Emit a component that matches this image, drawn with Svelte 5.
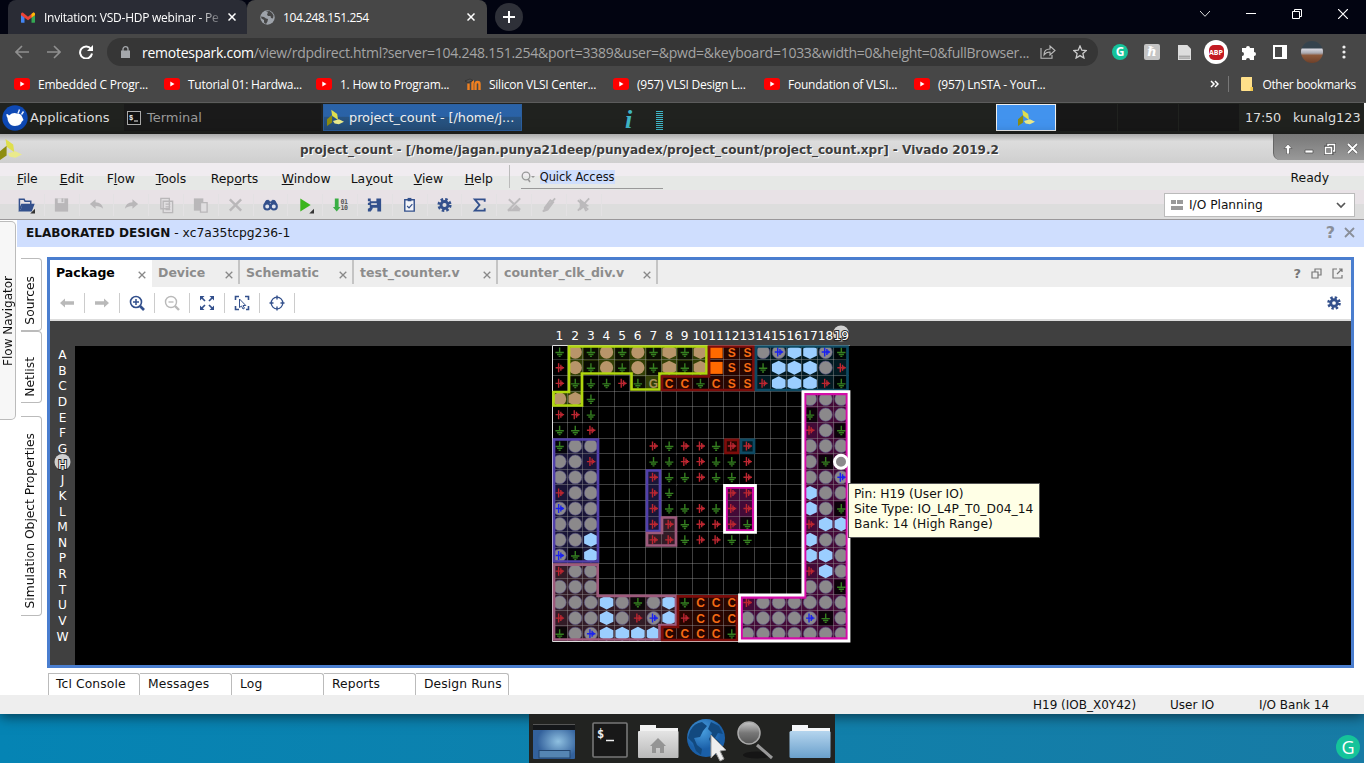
<script>
  const bookmarks = [
    { t: 'Embedded C Progr...', k: 'yt', w: 150 },
    { t: 'Tutorial 01: Hardwa...', k: 'yt', w: 152 },
    { t: '1. How to Program...', k: 'yt', w: 149 },
    { t: 'Silicon VLSI Center...', k: 'moodle', w: 148 },
    { t: '(957) VLSI Design L...', k: 'yt', w: 151 },
    { t: 'Foundation of VLSI...', k: 'yt', w: 150 },
    { t: '(957) LnSTA - YouT...', k: 'yt', w: 150 }
  ];
  const menus = [
    ['', 'F', 'ile', 42.7], ['', 'E', 'dit', 47], ['F', 'l', 'ow', 49], ['', 'T', 'ools', 55], ['Rep', 'o', 'rts', 71],
    ['', 'W', 'indow', 69], ['La', 'y', 'out', 63], ['', 'V', 'iew', 51], ['', 'H', 'elp', 44]
  ];
  const tools = ['open', 'save', 'undo', 'redo', 'copy', 'paste', 'cut', 'find', 'run', 'bits', 'flow', 'clip', 'gear', 'sigma', 'x1', 'x2', 'x3'];
  const docTabs = [
    { t: 'Package', w: 102, on: true }, { t: 'Device', w: 88 }, { t: 'Schematic', w: 114 },
    { t: 'test_counter.v', w: 144 }, { t: 'counter_clk_div.v', w: 160 }
  ];
  const viewTools = ['back', 'fwd', 'zin', 'zout', 'fit', 'sel', 'target'];
  const consoleTabs = [['Tcl Console', 92], ['Messages', 92], ['Log', 92], ['Reports', 92], ['Design Runs', 93]];
  const letters = 'ABCDEFGHJKLMNPRTUVW'.split('');
  const rows = [
    'gtgtgtgTgTqssobhhbg',
    'ptgtgtgTgTqssghhhop',
    'pgggpgGccgcssphhhpg',
    'tTg.............ooo',
    'ppg.............goo',
    'ggp.............pog',
    'goo...pgppgpp...ooo',
    'oop...ggppggp...ogS',
    'ooo...pggpggp...oob',
    'poo...pg...pp...hoo',
    'boo...pggpgpp...hog',
    'ooo...ppgpppg...phh',
    'ooh...ppgppgg...hoo',
    'bgh.............hho',
    'poo.............pho',
    'ooo.............oog',
    'ooohogohgcccpoooooo',
    'poohopbhpcccoooobgo',
    'gobhhhhccccgooooooo'
  ];
  const P = 15.65;
  const X0 = 552, Y0 = 344.6;
  const cells = rows.flatMap((r, j) => r.split('').map((k, i) => ({ k, x: X0 + i * P + P / 2 - .2, y: Y0 + j * P + P / 2 - .4 })));
  const lines = Array.from({ length: 18 }, (_, i) => i + 1);
  const regions = [
    { c: '#b0d60e', f: '#334006', p: '569,346.5 706.5,346.5 706.5,373.5 659.5,373.5 659.5,389.5 631.5,389.5 631.5,373.5 582,373.5 582,405.5 553.5,405.5 553.5,392 569,392' },
    { c: '#7d0d0b', f: '#270500', p: '709,346.5 753.5,346.5 753.5,390 662,390 662,376.5 709,376.5' },
    { c: '#0e4a63', f: '#021a22', p: '756,346.5 847.5,346.5 847.5,390 756,390' },
    { c: '#d40ca8', f: '#430a37', p: '805,394 847,394 847,638.7 741.5,638.7 741.5,597.3 805,597.3' },
    { c: '#d40ca8', f: '#430a37', p: '726.5,487.5 753.3,487.5 753.3,530.5 726.5,530.5' },
    { c: '#5140ab', f: '#191537', p: '554,439.5 598,439.5 598,561.5 554,561.5' },
    { c: '#5140ab', f: '#191537', p: '647,470.5 660,470.5 660,531 647,531' },
    { c: '#9d5a7c', f: '#321b26', p: '554,564.7 597.7,564.7 597.7,595.8 676,595.8 676,625 659.5,625 659.5,639.5 554,639.5' },
    { c: '#9d5a7c', f: '#321b26', p: '662,517.5 676,517.5 676,545.5 647,545.5 647,533 662,533' },
    { c: '#7d0d0b', f: '#270500', p: '678,596.3 737,596.3 737,640 662.3,640 662.3,627 678,627' },
    { c: '#7d0d0b', f: '#270500', p: '725.5,439.8 738.3,439.8 738.3,452.8 725.5,452.8' },
    { c: '#0e4a63', f: '#021a22', p: '741,439.8 754,439.8 754,452.8 741,452.8' }
  ];
</script>

{#snippet vivado(s)}
  <svg width={s} height={s} viewBox="0 0 20 20">
    <path d="M5 1l7 5 1 7-7-5z" fill="#dfdf4e" /><path d="M0 12l6-5v9l-6 4z" fill="#8d8c10" /><path d="M7 14l7-2 6 3-6 3-5-1z" fill="#eaea8c" />
  </svg>
{/snippet}
{#snippet gsym(x, y)}
  <path d="M{x} {y - 4.5}V{y + 1}M{x - 4.2} {y + .5}H{x + 4.2}M{x - 2.6} {y + 2.4}H{x + 2.6}M{x - 1} {y + 4.3}H{x + 1}" stroke="#357f20" stroke-width="1.4" fill="none" />
{/snippet}
{#snippet psym(x, y, c)}
  <path d="M{x - 4} {y}H{x + 4.5}M{x - 1} {y - 4.5}V{y + 4.5}M{x + 1.2} {y - 3}V{y + 3}M{x + 2.5} {y - 1.5}V{y + 1.5}" stroke={c} stroke-width="1.4" fill="none" />
{/snippet}

<div class="screen">
  <header class="chrome">
    <div class="strip">
      <div class="tab t1">
        <svg width="14" height="11" viewBox="0 0 16 12"><path d="M0 2v9a1 1 0 001 1h3V5z" fill="#4285f4" /><path d="M16 2v9a1 1 0 01-1 1h-3V5z" fill="#34a853" /><path d="M0 2Q0 0 2 .3L8 5l6-4.7Q16 0 16 2v1.500L8 9 0 3.500z" fill="#ea4335" /><path d="M12 2l2-1.700Q16 0 16 2v1l-4 3z" fill="#fbbc04" /></svg>
        <span class="fade">Invitation: VSD-HDP webinar - Pe</span>
        <svg class="x" width="8" height="8" viewBox="0 0 8 8"><path d="M.5.5l7 7M7.500.5l-7 7" stroke="#fff" stroke-width="1.500" /></svg>
      </div>
      <div class="tab t2">
        <svg width="15" height="15" viewBox="0 0 15 15"><circle cx="7.500" cy="7.500" r="7.200" fill="#9ea3aa" /><path d="M1 6.500l3 .5 2 1.500 2 .5-.5 2.500L6 14l-2-1.500V10L1.500 8.500zM6 1.500l2 1-1 2 1 1.500h2.500l.5 2 2 .5.500-3-1.500-2.500L9.500 1z" fill="#474747" /></svg>
        <span>104.248.151.254</span>
        <svg class="x" width="8" height="8" viewBox="0 0 8 8"><path d="M.5.5l7 7M7.500.5l-7 7" stroke="#fff" stroke-width="1.500" /></svg>
      </div>
      <div class="plus"><svg width="12" height="12" viewBox="0 0 12 12"><path d="M6 0v12M0 6h12" stroke="#fff" stroke-width="2" /></svg></div>
      <div class="win">
        <svg width="10" height="6" viewBox="0 0 10 6"><path d="M0 0l5 5.300L10 0" stroke="#ddd" fill="none" /></svg>
        <svg width="10" height="2" viewBox="0 0 10 2"><path d="M0 .5h10" stroke="#fff" /></svg>
        <svg width="10" height="10" viewBox="0 0 10 10"><path d="M.5 2.500h7v7h-7zM2.500 2V.5h7v7H8" stroke="#fff" fill="none" /></svg>
        <svg width="10" height="10" viewBox="0 0 10 10"><path d="M0 0l10 10M10 0L0 10" stroke="#fff" stroke-width="1.200" /></svg>
      </div>
    </div>
    <div class="nav">
      <svg width="14" height="14" viewBox="0 0 14 14"><path d="M14 7H1M7 1L1 7l6 6" stroke="#909090" stroke-width="1.600" fill="none" /></svg>
      <svg width="14" height="14" viewBox="0 0 14 14"><path d="M0 7h13M7 1l6 6-6 6" stroke="#909090" stroke-width="1.600" fill="none" /></svg>
      <svg width="14" height="14" viewBox="0 0 14 14"><path d="M12 4A6 6 0 1013 8.500" stroke="#fff" stroke-width="2" fill="none" /><path d="M14 0v6H8z" fill="#fff" /></svg>
      <div class="url">
        <svg width="9" height="12" viewBox="0 0 9 12"><path d="M0 4.500h9V12H0z" fill="#a5a8ac" /><path d="M2 5V3a2.500 2.300 0 015 0v2" stroke="#a5a8ac" stroke-width="1.300" fill="none" /></svg>
        <span class="addr"><b>remotespark.com</b>/view/rdpdirect.html?server=104.248.151.254&amp;port=3389&amp;user=&amp;pwd=&amp;keyboard=1033&amp;width=0&amp;height=0&amp;fullBrowser...</span>
        <svg class="share" width="16" height="14" viewBox="0 0 16 14"><path d="M1 3v10.300h11V10M4 10q0-6 6-6V1l5 4.500-5 4.500V7Q6 7 4 10z" stroke="#bbb" stroke-width="1.100" fill="none" /></svg>
        <svg width="14" height="14" viewBox="0 0 14 14"><path d="M7 1l1.800 4.200 4.500.4-3.400 3 1 4.400L7 10.600 3.100 13l1-4.400-3.400-3 4.500-.4z" stroke="#ccc" stroke-width="1.300" fill="none" /></svg>
      </div>
      <div class="exts">
        <span class="gr">G</span>
        <span class="honey">ℏ</span>
        <svg width="13" height="15" viewBox="0 0 14 16"><path d="M0 0h10l4 4v12H0z" fill="#ddd" /><path d="M1 12h12M1 14h12" stroke="#888" /></svg>
        <span class="adb"><i>ABP</i></span>
        <svg width="15" height="15" viewBox="0 0 15 15"><path d="M1 3h4a2 2 0 114 0h4v4a2 2 0 110 4v4H9a2 2 0 10-4 0H1v-4a2 2 0 100-4z" fill="#fff" /></svg>
        <svg width="14" height="14" viewBox="0 0 14 14"><path d="M1 1h12v12H1z" fill="none" stroke="#fff" stroke-width="2" /><path d="M9 0h5v14H9z" fill="#fff" /></svg>
        <span class="ava"></span>
        <svg width="4" height="14" viewBox="0 0 4 14"><circle cx="2" cy="2" r="1.600" fill="#eee" /><circle cx="2" cy="7" r="1.600" fill="#eee" /><circle cx="2" cy="12" r="1.600" fill="#eee" /></svg>
      </div>
    </div>
    <div class="marks">
      {#each bookmarks as b}
        <div class="mark" style="width:{b.w}px">
          {#if b.k === 'yt'}
            <svg width="16" height="12" viewBox="0 0 16 12"><rect width="16" height="12" rx="3" fill="#f00" /><path d="M6.300 3.500L10.500 6l-4.200 2.500z" fill="#fff" /></svg>
          {:else}
            <svg width="16" height="12" viewBox="0 0 16 12"><path d="M3.500 12V5.500M7.500 12V5q.5-1.500 1.500-1.500M10.500 12V6q0-2 2-2t2 2v6" fill="none" stroke="#f08020" stroke-width="2.400" /><path d="M0 3l5-2 3 1.500-5 2z" fill="#555" stroke="#222" stroke-width=".5" /></svg>
          {/if}
          <span>{b.t}</span>
        </div>
      {/each}
      <div class="other">
        <svg width="9" height="8" viewBox="0 0 9 8"><path d="M1 1l3 3-3 3M5 1l3 3-3 3" stroke="#fff" stroke-width="1.500" fill="none" /></svg>
        <i></i>
        <svg width="12" height="14" viewBox="0 0 12 14"><path d="M0 1q0-1 1-1h10v14H1q-1 0-1-1z" fill="#ffe08a" /><path d="M9.500 10H12v4H9.500z" fill="#f3c94a" /></svg>
        <span>Other bookmarks</span>
      </div>
    </div>
  </header>

  <div class="remote">
    <div class="panel">
      <svg class="mouse" width="26" height="26" viewBox="0 0 26 26"><circle cx="13" cy="13" r="12.700" fill="#0e49b5" /><path d="M4.500 9q1.500-.5 2.500 1.500 4-3.500 8-2 4 0 5 3l1.500 3.500-2 2q0 2-3.500 3.500-4 1-7-.5Q5.500 17 5.500 13 4 11 4.500 9z" fill="#fff" /><path d="M16 8.500l1.500-4M19.500 9.500l2-3" stroke="#e8f0ff" stroke-width="1.500" /></svg>
      <span class="apps">Applications</span>
      <div class="task">
        <svg width="14" height="14" viewBox="0 0 14 14"><rect x=".5" y=".5" width="13" height="13" fill="#111" stroke="#aaa" /><text x="2" y="8.500" font-size="7" font-weight="bold" fill="#eee" font-family="Liberation Mono">$</text><path d="M7 10h4" stroke="#eee" /></svg>
        <span>Terminal</span>
      </div>
      <div class="task on">{@render vivado(17)}<span>project_count - [/home/j...</span></div>
      <span class="info">i</span><span class="bars"></span>
      <div class="pager"><div class="cur">{@render vivado(17)}</div><div></div><div></div><div></div></div>
      <span class="clock">17:50</span><span class="user">kunalg123</span>
    </div>

    <div class="app">
      <div class="title">
        <div class="tl">{@render vivado(22)}</div>
        <span>project_count - [/home/jagan.punya21deep/punyadex/project_count/project_count.xpr] - Vivado 2019.2</span>
        <div class="wb">
          <svg width="10" height="10" viewBox="0 0 10 10"><path d="M5 0l4 4.500H6.500V10h-3V4.500H1z" fill="#fff" stroke="#555" stroke-width=".7" /></svg>
          <svg width="10" height="10" viewBox="0 0 10 10"><path d="M1 6h8v3H1z" fill="#fff" stroke="#555" stroke-width=".8" /></svg>
          <svg width="12" height="12" viewBox="0 0 12 12"><path d="M1 4h7v7H1zM4 3V1h7v7H9" fill="none" stroke="#555" stroke-width="3" /><path d="M1.500 4.500h6v6h-6zM4 3V1.500h6.500V8H9" fill="none" stroke="#fff" stroke-width="1.500" /></svg>
          <svg width="11" height="11" viewBox="0 0 11 11"><path d="M1 1l9 9M10 1l-9 9" stroke="#555" stroke-width="3" /><path d="M1 1l9 9M10 1l-9 9" stroke="#fff" stroke-width="1.800" /></svg>
        </div>
      </div>
      <div class="menubar">
        {#each menus as m}<span style="width:{m[3]}px">{m[0]}<u>{m[1]}</u>{m[2]}</span>{/each}
        <i class="vs"></i>
        <div class="quick">
          <svg width="14" height="12" viewBox="0 0 14 12"><circle cx="5" cy="5" r="3.800" fill="none" stroke="#999" stroke-width="1.300" /><path d="M7 8l2 3" stroke="#999" stroke-width="1.500" /><path d="M10 5h4l-2 2z" fill="#999" /></svg>
          <b>Quick Access</b>
        </div>
        <span class="ready">Ready</span>
      </div>
      <div class="toolbar">
        {#each tools as t}
          <div class="tool">
            <svg width="17" height="18" viewBox="0 0 18 18">
              {#if t === 'open'}<path d="M1.500 15V3h5l1 2h6v3M1.500 15L4 8.500h12.500L14 15z" fill="none" stroke="#33508c" stroke-width="1.600" /><path d="M4.500 9h12L14 15H2.500z" fill="#33508c" /><path d="M18 13v5h-5z" fill="#333" />
              {:else if t === 'save'}<path d="M2 2h14v14H2z" fill="#b9b7b9" /><path d="M5 2h7v5H5z" fill="#e0dee0" /><path d="M9 2h2v4H9z" fill="#b9b7b9" />
              {:else if t === 'undo'}<path d="M2 8l6-5v3q7 0 8 7-3-3-8-3v3z" fill="#b9b7b9" />
              {:else if t === 'redo'}<path d="M16 8l-6-5v3q-7 0-8 7 3-3 8-3v3z" fill="#b9b7b9" />
              {:else if t === 'copy'}<path d="M3 2h9v11H3zM5.500 5h10v12h-10z" fill="#e0dee0" stroke="#b9b7b9" stroke-width="1.400" /><path d="M8 8h5M8 11h5M8 14h5" stroke="#b9b7b9" stroke-width="1.300" />
              {:else if t === 'paste'}<path d="M2 2h10v13H2z" fill="#b9b7b9" /><path d="M9 6.500h7v10H9z" fill="#e0dee0" stroke="#b9b7b9" stroke-width="1.400" />
              {:else if t === 'cut'}<path d="M3 3l12 12M15 3L3 15" stroke="#b9b7b9" stroke-width="2.500" />
              {:else if t === 'find'}<path d="M3 7q1-4 4-3l2 2 2-2q3-1 4 3" fill="#33508c" stroke="#33508c" /><circle cx="5.500" cy="10.500" r="3.200" fill="#dfe3ee" stroke="#33508c" stroke-width="2.200" /><circle cx="12.500" cy="10.500" r="3.200" fill="#dfe3ee" stroke="#33508c" stroke-width="2.200" />
              {:else if t === 'run'}<path d="M3.500 2l11 7-11 7z" fill="#3bb51c" /><path d="M18 13v5h-5z" fill="#333" />
              {:else if t === 'bits'}<path d="M3 2h4v9h2l-4 5-4-5h2z" fill="#3aae44" /><text x="9" y="8" font-size="7" font-weight="bold" fill="#555" textLength="8" font-family="DejaVu Sans Mono">01</text><text x="9" y="14.500" font-size="7" font-weight="bold" fill="#555" textLength="8" font-family="DejaVu Sans Mono">10</text>
              {:else if t === 'flow'}<path d="M2 2h3v3h6V2h5v14h-4v-4H7v1l-2 3H2v-3l2-1V9H2V7l2-1V5H2z" fill="#33508c" /><path d="M5.500 8h6" stroke="#e0dee0" stroke-width="1.800" />
              {:else if t === 'clip'}<path d="M4 3.500h10v12H4z" fill="#f4f4f8" stroke="#33508c" stroke-width="1.500" /><path d="M7 1.500h4V5H7z" fill="#33508c" /><path d="M6.500 10l2 2 3.500-4" stroke="#33508c" stroke-width="1.300" fill="none" />
              {:else if t === 'gear'}<circle cx="9" cy="9" r="6" fill="none" stroke="#33508c" stroke-width="3" stroke-dasharray="2.600 2.110" /><circle cx="9" cy="9" r="3.700" fill="none" stroke="#33508c" stroke-width="3" />
              {:else if t === 'sigma'}<path d="M14.500 5.500V3H4l5 6-5 6h10.500v-2.500" fill="none" stroke="#33508c" stroke-width="2" />
              {:else if t === 'x1'}<path d="M2 15.500h13L9 7z" fill="#bcbabc" /><path d="M3 3l12 11M15 2L2 15" fill="none" stroke="#bcbabc" stroke-width="2.200" /><path d="M6 13l6-6" stroke="#dedcde" />
              {:else if t === 'x2'}<path d="M5 12l6-8 3 2-6 8-3 1zM7 13l5-7M3 16L16 2" fill="none" stroke="#bcbabc" stroke-width="1.900" />
              {:else}<path d="M5 2l10 8-4 1 2 4-2 1-2-4-4 3z" fill="#bcbabc" /><path d="M3 4l11 10M15 2L3 15" fill="none" stroke="#bcbabc" stroke-width="1.900" />{/if}
            </svg>
          </div>
        {/each}
        <div class="combo">
          <svg width="12" height="11" viewBox="0 0 12 11"><path d="M0 0h5v4H0zM6 0h6v4H6zM0 6h12v4H0z" fill="#9a9a9a" /></svg>
          <span>I/O Planning</span>
          <svg width="10" height="7" viewBox="0 0 10 7"><path d="M1 1l4 4 4-4" stroke="#555" stroke-width="1.700" fill="none" /></svg>
        </div>
      </div>

      <div class="body">
        <div class="flownav"><span>Flow Navigator</span></div>
        <div class="work">
          <div class="design"><b>ELABORATED DESIGN</b><span>&nbsp;- xc7a35tcpg236-1</span><em>?</em>
            <svg width="11" height="11" viewBox="0 0 11 11"><path d="M1 1l9 9M10 1l-9 9" stroke="#8a8f99" stroke-width="1.800" /></svg></div>
          <div class="mid">
            <div class="side">
              <div class="st s1"><span>Sources</span></div>
              <div class="st s2"><span>Netlist</span></div>
              <div class="st s3"><span>Simulation Object Properties</span></div>
            </div>
            <div class="right">
              <div class="pane">
                <div class="tabs">
                  {#each docTabs as d}
                    <div class="dt" class:on={d.on} style="width:{d.w}px"><span>{d.t}</span><svg width="8" height="8" viewBox="0 0 8 8"><path d="M.7.7l6.600 6.600M7.300.7L.7 7.300" stroke="#888" stroke-width="1.300" /></svg></div>
                  {/each}
                  <div class="ti">
                    <em>?</em>
                    <svg width="11" height="11" viewBox="0 0 11 11"><path d="M1 4h6v6H1zM4 4V1h6v6H7" fill="none" stroke="#777" stroke-width="1.200" /></svg>
                    <svg width="11" height="11" viewBox="0 0 11 11"><path d="M5 1H1v9h9V7M5 6l5-5M7 1h3v3" fill="none" stroke="#777" stroke-width="1.200" /></svg>
                  </div>
                </div>
                <div class="vt">
                  {#each viewTools as t}
                    <div class="vb">
                      <svg width="16" height="16" viewBox="0 0 16 16">
                        {#if t === 'back'}<path d="M1 8l5-4.500v2.700h9v3.600H6v2.700z" fill="#b9b9b9" />
                        {:else if t === 'fwd'}<path d="M15 8l-5-4.500v2.700H1v3.600h9v2.700z" fill="#b9b9b9" />
                        {:else if t === 'zin'}<circle cx="7" cy="7" r="5.500" fill="none" stroke="#33508c" stroke-width="1.600" /><path d="M4 7h6M7 4v6" stroke="#33508c" stroke-width="1.500" /><path d="M11 11l4 4" stroke="#33508c" stroke-width="2.600" />
                        {:else if t === 'zout'}<circle cx="7" cy="7" r="5.500" fill="none" stroke="#b9b9b9" stroke-width="1.400" /><path d="M4.500 7h5" stroke="#b9b9b9" stroke-width="1.300" /><path d="M11 11l4 4" stroke="#b9b9b9" stroke-width="2.400" />
                        {:else if t === 'fit'}<path d="M1 1h4.500L1 5.500zM15 1v4.500L10.500 1zM1 15v-4.500L5.500 15zM15 15h-4.500l4.500-4.500z" fill="#33508c" /><path d="M2 2l4 4M14 2l-4 4M2 14l4-4M14 14l-4-4" stroke="#33508c" stroke-width="1.700" />
                        {:else if t === 'sel'}<path d="M1.500 5V1.500H5M11 1.500h3.500V5M1.500 11v3.500H5M14.500 11v3.500H12" fill="none" stroke="#33508c" stroke-width="1.600" /><path d="M5.500 4v8.500l2-1.500 1.500 3 1.500-.8L9 10.500h2.800z" fill="#fff" stroke="#33508c" />
                        {:else}<circle cx="8" cy="8" r="5.800" fill="none" stroke="#33508c" stroke-width="1.300" /><path d="M8 .5v4M8 11.500v4M.5 8h4M11.500 8h4" stroke="#33508c" stroke-width="1.400" />{/if}
                      </svg>
                    </div>
                  {/each}
                  <svg class="vg" width="14" height="14" viewBox="0 0 18 18"><circle cx="9" cy="9" r="7" fill="none" stroke="#33508c" stroke-width="3.500" stroke-dasharray="3 2.500" /><circle cx="9" cy="9" r="4.200" fill="none" stroke="#33508c" stroke-width="3.600" /></svg>
                </div>
                <svg class="canvas" width="1301" height="344" viewBox="50 321 1301 344">
                  <rect x="50" y="321" width="1301" height="344" fill="#404040" />
                  <rect x="75" y="346" width="1276" height="319" fill="#000" />
                  <circle cx="841" cy="333.500" r="8" fill="#d0d0d0" />
                  <circle cx="62.500" cy="462" r="8" fill="#d0d0d0" />
                  {#each letters as l, i}
                    <text class="lab" x="62.500" y={359.200 + i * 15.630} fill={l === 'H' ? '#fff' : '#fff'} stroke={l === 'H' ? '#222' : 'none'} stroke-width="2" paint-order="stroke">{l}</text>
                    <text class="lab" x={559.500 + i * 15.650} y="339.500" fill="#fff" stroke={i === 18 ? '#222' : 'none'} stroke-width="2" paint-order="stroke">{i + 1}</text>
                  {/each}
                  <rect x="552.500" y="345.500" width="297" height="295.500" fill="#000" />
                  {#each regions as r}<polygon points={r.p} fill={r.f} />{/each}
                  {#each lines as i}
                    <path d="M{Math.round(X0 + i * P) - .5} 345V641M552 {Math.round(Y0 + i * P) - .5}H849" stroke="#999" stroke-opacity=".42" stroke-width="1" />
                  {/each}
                  {#each cells as c}
                    {#if c.k === 'g'}<rect x={c.x - 7} y={c.y - 7} width="14.400" height="14.400" fill="#000" fill-opacity=".8" />{@render gsym(c.x, c.y)}
                    {:else if c.k === 'p'}{@render psym(c.x, c.y, '#bb2630')}
                    {:else if c.k === 'o' || c.k === 'b'}<circle cx={c.x} cy={c.y} r="6.600" fill="#8b898b" stroke="#5b5587" stroke-width=".6" />{#if c.k === 'b'}{@render psym(c.x, c.y, '#1a22ee')}{/if}
                    {:else if c.k === 'h' || c.k === 'T'}<polygon points="{c.x},{c.y - 7} {c.x + 6.800},{c.y - 3.600} {c.x + 6.800},{c.y + 3.600} {c.x},{c.y + 7} {c.x - 6.800},{c.y + 3.600} {c.x - 6.800},{c.y - 3.600}" fill={c.k === 'h' ? '#9bceff' : '#b8956a'} />
                    {:else if c.k === 't'}<circle cx={c.x} cy={c.y} r="6.600" fill="#b8956a" />
                    {:else if c.k === 'q'}<rect x={c.x - 6} y={c.y - 5.800} width="12.500" height="12" fill="#ff6a00" />
                    {:else if c.k === 'S'}<circle cx={c.x} cy={c.y} r="6" fill="#8b898b" />
                    {:else if c.k === 'c' || c.k === 's'}<text class="pin" x={c.x} y={c.y + 4.500} fill="#f46a14">{c.k.toUpperCase()}</text>
                    {:else if c.k === 'G'}<text class="pin" x={c.x} y={c.y + 4.500} fill="#a89058">G</text>{/if}
                  {/each}
                  <path d="M552.500 641.500V345.500H849.500M552.500 641.500H740" fill="none" stroke="#ddd" />
                  {#each regions as r}<polygon points={r.p} fill="none" stroke={r.c} stroke-width="2.700" />{/each}
                  <path d="M803 391.700H849V641H739.500V595H803z" fill="none" stroke="#fff" stroke-width="2.800" />
                  <path d="M724.500 485.500H755.500V532.300H724.500z" fill="none" stroke="#fff" stroke-width="2.800" />
                  <circle cx="841" cy="461.800" r="6.500" fill="#8b898b" stroke="#fff" stroke-width="3" />
                </svg>
              </div>
              <div class="ctabs">
                {#each consoleTabs as c}<div style="width:{c[1]}px">{c[0]}</div>{/each}
              </div>
            </div>
          </div>
        </div>
      </div>
      <div class="status"><span class="a">H19 (IOB_X0Y42)</span><span class="b">User IO</span><span class="c">I/O Bank 14</span></div>
      <div class="tip">Pin: H19 (User IO)<br />Site Type: IO_L4P_T0_D04_14<br />Bank: 14 (High Range)</div>
    </div>

    <div class="desk">
      <div class="dock">
        <svg width="306" height="49" viewBox="529 714 306 49">
          <defs>
            <radialGradient id="gb" cx=".6" cy=".5"><stop offset="0" stop-color="#8fc0e0" /><stop offset="1" stop-color="#33619c" /></radialGradient>
            <radialGradient id="ge" cx=".4" cy=".3"><stop offset="0" stop-color="#4aa0e0" /><stop offset="1" stop-color="#1a5fa8" /></radialGradient>
            <linearGradient id="gm" x2="0" y2="1"><stop offset="0" stop-color="#c8c8c8" /><stop offset=".5" stop-color="#777" /><stop offset="1" stop-color="#555" /></linearGradient>
            <linearGradient id="gf" x2="0" y2="1"><stop offset="0" stop-color="#b5d5ee" /><stop offset="1" stop-color="#6aa0cc" /></linearGradient>
            <linearGradient id="gw" x2="0" y2="1"><stop offset="0" stop-color="#e4e4e4" /><stop offset="1" stop-color="#b9b9b9" /></linearGradient>
          </defs>
          <rect x="533" y="724" width="42" height="35" rx="1" fill="url(#gb)" /><rect x="533" y="724" width="42" height="6" fill="#15171a" /><path d="M533 724.500h42" stroke="#555" /><rect x="539" y="750.500" width="31" height="7.500" fill="#5585b2" stroke="#23456e" />
          <rect x="593" y="723" width="34" height="34" rx="1" fill="#181818" stroke="#777" stroke-width="1.600" /><text x="597" y="738" font-size="12" font-weight="bold" fill="#eee" font-family="DejaVu Sans Mono">$</text><path d="M606 740.500h8" stroke="#eee" stroke-width="1.500" />
          <path d="M640 728v-3h16v3h22v30h-38z" fill="#f2f2f2" /><rect x="638" y="731" width="40.500" height="27" rx="1" fill="url(#gw)" /><path d="M658 738l8 8h-2v7h-4v-5h-4v5h-4v-7h-2z" fill="#949494" />
          <circle cx="706" cy="738" r="19" fill="url(#ge)" /><path d="M690 731q4-8 12-9l5 4-4 5-3 6-6 1 3 7 5 4-1 6-5-4-3-8-5-5zM711 722l8 4 4 8-5-1-3 5 5 4-2 8-6-4-3-7 3-6-4-4z" fill="#12497f" /><path d="M711 735l15 15-6 1 4 8-4 2-4-8-5 5z" fill="#eee" stroke="#999" />
          <ellipse cx="757" cy="755" rx="14" ry="3.500" fill="#151515" /><path d="M757 745l15 13" stroke="#999" stroke-width="3" /><circle cx="749" cy="733" r="11" fill="url(#gm)" stroke="#aaa" stroke-width="1.500" />
          <path d="M792 730v-5h16v3h22v30h-38z" fill="#f4f6f8" /><rect x="789.500" y="731" width="41" height="27" rx="1.500" fill="url(#gf)" />
        </svg>
      </div>
      <span class="gram">G</span>
    </div>
  </div>
</div>

<style>
  :global(body) { margin: 0; background: #fff; overflow: hidden; }
  .screen { width: 1366px; height: 766px; overflow: hidden; background: #fff; font-family: "DejaVu Sans", sans-serif; font-size: 12px; color: #111; }
  .screen svg { display: block; flex: none; }
  .screen span { white-space: nowrap; }
  .chrome { height: 103px; background: #474747; font-family: "Open Sans", "Noto Sans", sans-serif; color: #fff; box-sizing: border-box; border-bottom: 1px solid #5c5c5c; }
  .strip { height: 34px; background: #020411; display: flex; padding-left: 8px; }
  .tab { box-sizing: border-box; display: flex; align-items: center; border-radius: 8px 8px 0 0; font-size: 12px; letter-spacing: -.25px; }
  .t1 { width: 239px; background: #2a2c35; padding: 0 11px 0 13px; }
  .t1 span { margin-left: 9px; width: 178px; overflow: hidden; -webkit-mask-image: linear-gradient(90deg, #000 155px, transparent 182px); }
  .t2 { width: 240px; background: #474747; padding: 0 12px 0 13px; }
  .t2 span { margin-left: 8px; letter-spacing: -.4px; }
  .x { margin-left: auto; }
  .plus { width: 28px; height: 28px; border-radius: 50%; background: #2e3038; display: flex; align-items: center; justify-content: center; margin: 3px 0 0 8px; }
  .win { margin-left: auto; display: flex; align-items: center; gap: 36px; padding-right: 18px; height: 28px; }
  .nav { height: 36px; display: flex; align-items: center; padding-left: 15px; gap: 18px; }
  .url { box-sizing: border-box; width: 991px; height: 28px; border-radius: 14px; background: #363636; display: flex; align-items: center; padding: 0 11px 0 14px; margin-left: -4px; flex: none; }
  .addr { margin-left: 12px; color: #a4a4a4; font-size: 14px; width: 889px; letter-spacing: -.26px; flex: none; }
  .addr b { color: #fff; font-weight: 400; }
  .share { margin-left: 9px; margin-right: 17px; }
  .exts { display: grid; grid-template-columns: repeat(8, 32px); align-items: center; justify-items: center; margin-left: -12px; flex: none; }
  .gr { width: 16px; height: 16px; border-radius: 50%; background: #15c39a; text-align: center; font: bold 12px/16px "Open Sans"; }
  .honey { width: 16px; height: 16px; border-radius: 2px; background: #c4c4c4; text-align: center; font: italic bold 13px/16px "DejaVu Serif", serif; }
  .adb { width: 24px; height: 24px; border-radius: 50%; background: #fff; display: flex; align-items: center; justify-content: center; }
  .adb i { width: 15px; height: 15px; border-radius: 5px; background: #c31b23; font: bold 7px/15px "Open Sans"; text-align: center; }
  .ava { width: 22px; height: 22px; border-radius: 50%; background: linear-gradient(#35434d 30%, #d4d4dc 38%, #a8a8b0 55%, #8d5a3c 65%, #6e4029); }
  .marks { height: 32px; display: flex; align-items: center; padding: 0 10px 4px 14px; box-sizing: border-box; font-size: 12px; letter-spacing: -.25px; }
  .mark { display: flex; align-items: center; gap: 8px; }
  .other { margin-left: auto; display: flex; align-items: center; gap: 9px; letter-spacing: -.33px; }
  .other i { width: 1px; height: 16px; background: #777; margin-right: 3px; }
  .remote { width: 1364px; height: 660px; background: #0d80b0; overflow: hidden; }
  .panel { height: 31px; background: #20221f; color: #ddd; display: flex; align-items: center; font-size: 13px; box-sizing: border-box; padding: 0 3px 2px 2px; }
  .mouse { flex: none; }
  .apps { margin-left: 2px; width: 94px; }
  .task { width: 197px; height: 27px; background: #1a1a1a; display: flex; align-items: center; padding-left: 3px; box-sizing: border-box; gap: 6px; color: #999; flex: none; }
  .task.on { width: 199px; margin-left: 2px; background: linear-gradient(#2a63a8, #2a62a6 45%, #285483 50%, #254d78); color: #eee; font-size: 12.900px; letter-spacing: -.05px; padding-left: 3px; border: 1px solid #2c5f9f; gap: 5px; }
  .info { font: italic bold 26px/27px "Liberation Serif"; color: #3fb5c5; margin-left: 103px; width: 31px; padding-top: 4px; }
  .bars { width: 7px; height: 19px; margin-top: 6px; background: repeating-linear-gradient(#3fb5c5 0 1px, #20221f 1px 2px); }
  .pager { display: flex; gap: 1px; margin-left: auto; }
  .pager div { width: 60px; height: 27px; background: #171717; box-sizing: border-box; }
  .pager .cur { background: #4293ee; border: 1px solid #eee; display: flex; align-items: center; justify-content: center; }
  .clock { margin-left: 6px; width: 48px; font-size: 12.800px; letter-spacing: -.2px; }
  .user { font-size: 12.900px; width: 68px; }
  .app { width: 1364px; height: 580px; background: #fff; position: relative; box-shadow: 0 3px 12px #0008; }
  .title { height: 29px; background: linear-gradient(#aaa, #dcdcdc 25%, #d9d9d9 45%, #cfcfcf); display: flex; align-items: center; font-weight: bold; font-size: 12.050px; color: #3c3c3c; text-shadow: 1px 1px 0 #fff; }
  .title > span { padding-top: 2px; }
  .tl { width: 300px; }
  .wb { margin-left: auto; width: 91px; height: 26px; margin-bottom: 3px; border-radius: 0 0 0 7px; background: linear-gradient(#777, #999); display: flex; align-items: center; justify-content: space-around; padding: 3px 1px 0 4px; box-sizing: border-box; border-left: 1px solid #666; }
  .menubar { height: 27px; background: linear-gradient(#f0ecf0 50%, #e6e8e6 50%); display: flex; align-items: center; padding-left: 17px; font-size: 12.400px; }
  .menubar > span { padding-top: 4px; flex: none; }
  .vs { width: 1px; height: 23px; background: #bbb; margin-right: 11px; }
  .quick { display: flex; align-items: center; width: 142px; height: 24px; box-sizing: border-box; border-bottom: 1px solid #999; gap: 5px; padding-top: 1px; }
  .quick b { font-weight: 400; font-size: 11.400px; background: #cfdefd; line-height: 14px; }
  .menubar .ready { margin-left: auto; margin-right: 35px; padding-top: 2px; }
  .toolbar { height: 29px; background: linear-gradient(#e8e2e6 50%, #dddddd 50%); display: flex; align-items: center; padding-left: 10px; border-bottom: 1px solid #9a989a; }
  .tool { width: 34.800px; height: 22px; display: flex; align-items: center; justify-content: center; box-sizing: border-box; border-right: 1px solid #e3e1e3; padding-top: 1px; }
  .combo { margin-left: auto; margin-right: 9px; width: 191px; height: 24px; margin-top: 1px; box-sizing: border-box; border: 1px solid #bbb; background: #fff; display: flex; align-items: center; padding: 0 8px 0 6px; gap: 6px; }
  .combo span { flex: 1; font-size: 12.200px; }
  .body { height: 475px; display: flex; align-items: flex-start; }
  .flownav { width: 15px; height: 197px; margin-top: 1px; border: 1px solid #bbb; border-left: 0; border-radius: 0 5px 5px 0; background: #f7f7f7; display: flex; align-items: center; justify-content: center; }
  .flownav span, .st span { writing-mode: vertical-rl; transform: rotate(180deg); font-size: 12px; }
  .st span { font-size: 12.300px; }
  .work { flex: 1; margin-left: 1px; }
  .design { height: 27px; background: #cfdefe; display: flex; align-items: center; padding: 0 9px; font-size: 12.050px; box-sizing: border-box; padding-bottom: 2px; }
  .design span { font-size: 12.300px; }
  .design em { margin-left: auto; margin-right: 9px; font: bold 16px "DejaVu Sans"; color: #8a8f99; }
  .mid { display: flex; height: 448px; }
  .side { width: 30px; padding-top: 11px; }
  .st { box-sizing: border-box; width: 21px; margin-left: 4px; border: 1px solid #bbb; border-left: 0; border-radius: 0 4px 4px 0; display: flex; align-items: center; justify-content: center; padding-right: 2px; }
  .s1 { height: 73px; padding-top: 11px; } .s2 { height: 72px; padding-top: 20px; } .s3 { height: 200px; margin-top: 13px; padding-top: 10px; }
  .right { flex: 1; padding-top: 10px; }
  .pane { width: 1301px; border: 3px solid #4a7ecf; background: #fff; height: 405px; }
  .tabs { height: 27px; background: #eee; display: flex; }
  .dt { box-sizing: border-box; display: flex; align-items: center; justify-content: space-between; padding: 1px 5px 0 6px; font-weight: bold; font-size: 12.500px; color: #8c8c8c; border-right: 2px solid #c4c4c4; height: 24px; }
  .dt.on { background: #fff; color: #000; height: 27px; border: 0; padding-bottom: 3px; padding-right: 6px; }
  .dt svg { margin-top: 4px; }
  .ti { margin-left: auto; display: flex; align-items: center; gap: 10px; padding-right: 8px; }
  .ti em { font: bold 13px "DejaVu Sans"; color: #777; }
  .vt { height: 32px; border-bottom: 2px solid #ddd; display: flex; align-items: center; }
  .vb { width: 35px; height: 20px; box-sizing: border-box; border-right: 1px solid #ccc; display: flex; align-items: center; justify-content: center; }
  .vg { margin-left: auto; margin-right: 10px; }
  .lab { font: 12.200px "DejaVu Sans"; text-anchor: middle; }
  .pin { font: bold 12px "Liberation Sans"; text-anchor: middle; }
  .ctabs { display: flex; margin: 5px 0 0 1px; }
  .ctabs div { box-sizing: border-box; height: 22px; border: 1px solid #bbb; border-left: 0; border-bottom: 0; padding: 3px 0 0 8px; font-size: 12.300px; letter-spacing: .12px; border-radius: 0 3px 0 0; white-space: nowrap; }
  .ctabs div:first-child { border-left: 1px solid #bbb; padding-left: 7px; }
  .status { height: 19px; background: #eee; font-size: 12px; display: flex; align-items: center; padding-left: 1033px; }
  .a { width: 137px; } .b { width: 89px; }
  .tip { position: absolute; left: 848px; top: 349px; width: 192px; height: 55px; box-sizing: border-box; background: #ffffe6; border: 1px solid #555; padding: 3px 5px; line-height: 15px; font-size: 12.250px; white-space: nowrap; }
  .desk { height: 49px; background: linear-gradient(90deg, #0584b4, #1080ab 55%, #177ba5); display: flex; align-items: flex-start; justify-content: space-between; padding-left: 529px; padding-right: 4px; }
  .dock { background: #222321; position: relative; }
  .gram { width: 24px; height: 24px; border-radius: 50%; background: #15c39a; color: #fff; font: 18px/24px "Open Sans"; text-align: center; margin-top: 21px; }
</style>
